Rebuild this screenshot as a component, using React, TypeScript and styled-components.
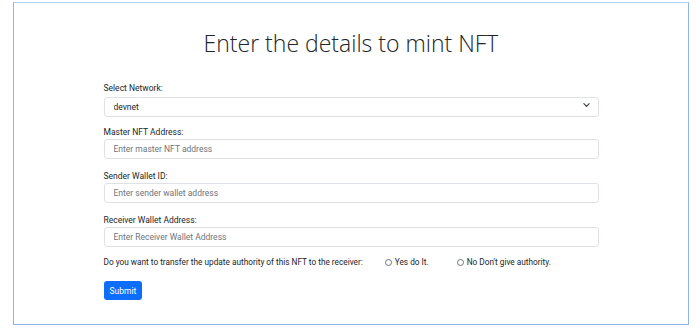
import React, { useState } from "react";
import styled, { createGlobalStyle } from "styled-components";

const GlobalStyle = createGlobalStyle`
  html, body {
    margin: 0;
    padding: 0;
    background: #ffffff;
    font-family: Roboto, "Open Sans", "Liberation Sans", sans-serif;
    color: #212529;
  }
`;

const Frame = styled.div`
  margin: 2px 11px 0 13px;
  height: 323px;
  box-sizing: border-box;
  border: 1px solid #8fb3ef;
  border-top-color: #b7cff7;
  display: flex;
  flex-direction: column;
  align-items: center;
`;

const Title = styled.h1`
  margin: 22px 0 0;
  font-family: "Open Sans", "Noto Sans", sans-serif;
  font-size: 23px;
  font-weight: 300;
  line-height: 36px;
  color: #212529;
`;

const Form = styled.form`
  width: 495px;
  margin-top: 21px;
  display: flex;
  flex-direction: column;
`;

const Field = styled.div`
  display: flex;
  flex-direction: column;
  margin-bottom: 11px;
`;

const Label = styled.label`
  font-size: 8.5px;
  line-height: 12px;
  color: #212529;
  margin-bottom: 1px;
`;

const TextInput = styled.input`
  box-sizing: border-box;
  height: 20px;
  width: 100%;
  padding: 0 9px;
  border: 1px solid #dee2e6;
  border-radius: 3px;
  font-family: inherit;
  font-size: 8.5px;
  color: #212529;
  outline: none;
  &::placeholder {
    color: #6c757d;
  }
`;

const SelectBox = styled.div`
  position: relative;
  height: 20px;
`;

const Select = styled.select`
  box-sizing: border-box;
  appearance: none;
  height: 20px;
  width: 100%;
  padding: 0 9px;
  border: 1px solid #dee2e6;
  border-radius: 3px;
  background: #fff;
  font-family: inherit;
  font-size: 8.5px;
  color: #212529;
  outline: none;
`;

const Chevron = styled.svg`
  position: absolute;
  right: 9px;
  top: 7px;
  width: 7px;
  height: 6px;
  pointer-events: none;
`;

const Question = styled.div`
  display: flex;
  align-items: center;
  font-size: 8.25px;
  line-height: 12px;
  margin-top: -2px;
  white-space: nowrap;
`;

const QuestionText = styled.span`
  margin-right: 22px;
`;

const RadioLabel = styled.label`
  display: flex;
  align-items: center;
  gap: 3px;
  margin-right: 28px;
`;

const Radio = styled.input`
  appearance: none;
  margin: 0;
  width: 7px;
  height: 7px;
  box-sizing: border-box;
  border: 1px solid #6c757d;
  border-radius: 50%;
  &:checked {
    background: #0d6efd;
    border-color: #0d6efd;
  }
`;

const Submit = styled.button`
  align-self: flex-start;
  margin-top: 13px;
  height: 19px;
  padding: 0 6px;
  border: none;
  border-radius: 3px;
  background: #0d6efd;
  color: #fff;
  font-family: inherit;
  font-size: 8.5px;
  cursor: pointer;
`;

const fields = [
  { label: "Master NFT Address:", placeholder: "Enter master NFT address" },
  { label: "Sender Wallet ID:", placeholder: "Enter sender wallet address" },
  { label: "Receiver Wallet Address:", placeholder: "Enter Receiver Wallet Address" },
];

export default function App() {
  const [network, setNetwork] = useState("devnet");
  const [authority, setAuthority] = useState("");

  return (
    <>
      <GlobalStyle />
      <Frame>
        <Title>Enter the details to mint NFT</Title>
        <Form onSubmit={(e) => e.preventDefault()}>
          <Field>
            <Label>Select Network:</Label>
            <SelectBox>
              <Select value={network} onChange={(e) => setNetwork(e.target.value)}>
                <option value="devnet">devnet</option>
                <option value="testnet">testnet</option>
                <option value="mainnet-beta">mainnet-beta</option>
              </Select>
              <Chevron viewBox="0 0 16 12">
                <path d="M2 3l6 6 6-6" fill="none" stroke="#343a40" strokeWidth="2.5" strokeLinecap="round" strokeLinejoin="round" />
              </Chevron>
            </SelectBox>
          </Field>
          {fields.map((f) => (
            <Field key={f.label}>
              <Label>{f.label}</Label>
              <TextInput placeholder={f.placeholder} />
            </Field>
          ))}
          <Question>
            <QuestionText>
              Do you want to transfer the update authority of this NFT to the receiver:
            </QuestionText>
            <RadioLabel>
              <Radio
                type="radio"
                name="authority"
                checked={authority === "yes"}
                onChange={() => setAuthority("yes")}
              />
              Yes do It.
            </RadioLabel>
            <RadioLabel>
              <Radio
                type="radio"
                name="authority"
                checked={authority === "no"}
                onChange={() => setAuthority("no")}
              />
              No Don't give authority.
            </RadioLabel>
          </Question>
          <Submit type="submit">Submit</Submit>
        </Form>
      </Frame>
    </>
  );
}
